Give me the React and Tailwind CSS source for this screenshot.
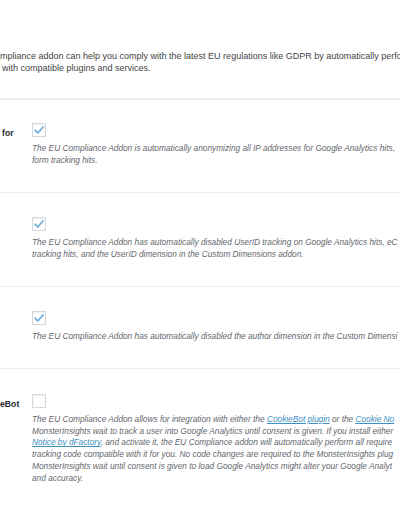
import React from 'react';

const Checkbox = ({ checked }) => (
  <span className="flex h-[14px] w-[14px] items-center justify-center border border-[#d6d9dc] bg-white shadow-[inset_0_1px_2px_rgba(0,0,0,0.07)]">
    {checked && (
      <svg width="12" height="12" viewBox="0 0 12 12">
        <path d="M2.2 6.3 L4.8 9 L10 3" fill="none" stroke="#6aaedc" strokeWidth="1.8" strokeLinecap="round" strokeLinejoin="round" />
      </svg>
    )}
  </span>
);

const Link = ({ children }) => (
  <a href="#" className="text-[#3d8fc4] underline">{children}</a>
);

function SettingRow({ label, labelClass = '', checked, lines, last }) {
  return (
    <div className={`flex ${last ? 'pt-[25px] pb-[25px]' : 'pt-[23.5px] pb-[25.5px] border-b border-[#ececec]'}`}>
      <div className="w-[32px] shrink-0">
        {label && (
          <div className={`mt-[4px] whitespace-nowrap text-[8.7px] font-bold leading-[12px] text-[#23282d] ${labelClass}`}>{label}</div>
        )}
      </div>
      <div className="min-w-0 flex-1">
        <Checkbox checked={checked} />
        <div className="mt-[6px] text-[8.3px] italic leading-[11.8px] text-[#64676d]">
          {lines.map((line, i) => (
            <div key={i} className="whitespace-nowrap">{line}</div>
          ))}
        </div>
      </div>
    </div>
  );
}

export default function App() {
  return (
    <div className="h-[505px] w-[400px] overflow-hidden bg-white font-['Liberation_Sans',Arial,sans-serif]">
      <div className="border-b-2 border-[#f0f0f0] pb-[23px] pt-[50px] text-[9px] leading-[12.4px] text-[#444]">
        <div className="whitespace-nowrap">mpliance addon can help you comply with the latest EU regulations like GDPR by automatically perform</div>
        <div className="whitespace-nowrap pl-[2px]"> with compatible plugins and services.</div>
      </div>

      <SettingRow
        label="for"
        labelClass="pl-[2px]"
        checked
        lines={[
          'The EU Compliance Addon is automatically anonymizing all IP addresses for Google Analytics hits,',
          'form tracking hits.',
        ]}
      />
      <SettingRow
        checked
        lines={[
          'The EU Compliance Addon has automatically disabled UserID tracking on Google Analytics hits, eC',
          'tracking hits, and the UserID dimension in the Custom Dimensions addon.',
        ]}
      />
      <SettingRow
        checked
        lines={[
          'The EU Compliance Addon has automatically disabled the author dimension in the Custom Dimensi',
        ]}
      />
      <SettingRow
        label="eBot"
        checked={false}
        last
        lines={[
          <>The EU Compliance Addon allows for integration with either the <Link>CookieBot plugin</Link> or the <Link>Cookie No</Link></>,
          'MonsterInsights wait to track a user into Google Analytics until consent is given. If you install either',
          <><Link>Notice by dFactory</Link>, and activate it, the EU Compliance addon will automatically perform all require</>,
          'tracking code compatible with it for you. No code changes are required to the MonsterInsights plug',
          'MonsterInsights wait until consent is given to load Google Analytics might alter your Google Analyt',
          'and accuracy.',
        ]}
      />
    </div>
  );
}
